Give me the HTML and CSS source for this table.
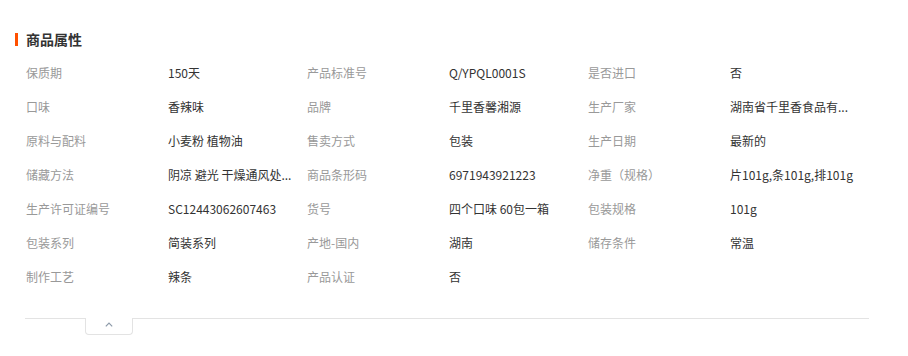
FILE: index.html
```html
<!DOCTYPE html>
<html lang="zh-CN">
<head>
<meta charset="utf-8">
<title>商品属性</title>
<link rel="stylesheet" href="styles.css">
</head>
<body>
<section class="attrs">
  <h2 class="attrs-title">商品属性</h2>
  <div class="attrs-grid">
    <div class="k">保质期</div><div class="v">150天</div>
    <div class="k">产品标准号</div><div class="v">Q/YPQL0001S</div>
    <div class="k">是否进口</div><div class="v">否</div>

    <div class="k">口味</div><div class="v">香辣味</div>
    <div class="k">品牌</div><div class="v">千里香馨湘源</div>
    <div class="k">生产厂家</div><div class="v">湖南省千里香食品有...</div>

    <div class="k">原料与配料</div><div class="v">小麦粉 植物油</div>
    <div class="k">售卖方式</div><div class="v">包装</div>
    <div class="k">生产日期</div><div class="v">最新的</div>

    <div class="k">储藏方法</div><div class="v">阴凉 避光 干燥通风处...</div>
    <div class="k">商品条形码</div><div class="v">6971943921223</div>
    <div class="k">净重（规格）</div><div class="v">片101g,条101g,排101g</div>

    <div class="k">生产许可证编号</div><div class="v">SC12443062607463</div>
    <div class="k">货号</div><div class="v">四个口味 60包一箱</div>
    <div class="k">包装规格</div><div class="v">101g</div>

    <div class="k">包装系列</div><div class="v">简装系列</div>
    <div class="k">产地-国内</div><div class="v">湖南</div>
    <div class="k">储存条件</div><div class="v">常温</div>

    <div class="k">制作工艺</div><div class="v">辣条</div>
    <div class="k">产品认证</div><div class="v">否</div>
  </div>
  <div class="fold">
    <button class="fold-tab" type="button" aria-label="收起">
      <svg width="8" height="5" viewBox="0 0 8 5"><polyline points="0.8,4.4 4,1.2 7.2,4.4" fill="none" stroke="#8c99a8" stroke-width="1.2"/></svg>
    </button>
  </div>
</section>
</body>
</html>
```

FILE: styles.css
```css
* { box-sizing: border-box; }
html, body { margin: 0; padding: 0; background: #fff; }
body {
  font-family: "Noto Sans CJK SC", "Liberation Sans", sans-serif;
  font-size: 12px;
  color: #333;
}
.attrs {
  padding: 29px 39px 0 15px;
  width: 908px;
}
.attrs-title {
  margin: 0;
  height: 20px;
  line-height: 20px;
  font-size: 14px;
  font-weight: bold;
  color: #333;
  display: flex;
  align-items: center;
  gap: 8px;
}
.attrs-title::before {
  content: "";
  width: 3px;
  height: 13px;
  background: #ff5000;
}
.attrs-grid {
  margin: 7px 0 0 11px;
  display: grid;
  grid-template-columns: repeat(3, 142px 139px);
  grid-auto-rows: 34px;
  line-height: 34px;
}
.k { color: #999; white-space: nowrap; }
.v { color: #333; white-space: nowrap; overflow: hidden; }
.fold {
  margin: 24px 0 0 10px;
  border-top: 1px solid #e3e3e3;
  height: 30px;
  padding-left: 60px;
}
.fold-tab {
  display: flex;
  align-items: center;
  justify-content: center;
  margin: -1px 0 0 0;
  width: 48px;
  height: 17px;
  padding: 0 0 4px 0;
  background: #fff;
  border: 1px solid #e3e3e3;
  border-top: none;
  border-radius: 0 0 4px 4px;
  cursor: pointer;
}
```
